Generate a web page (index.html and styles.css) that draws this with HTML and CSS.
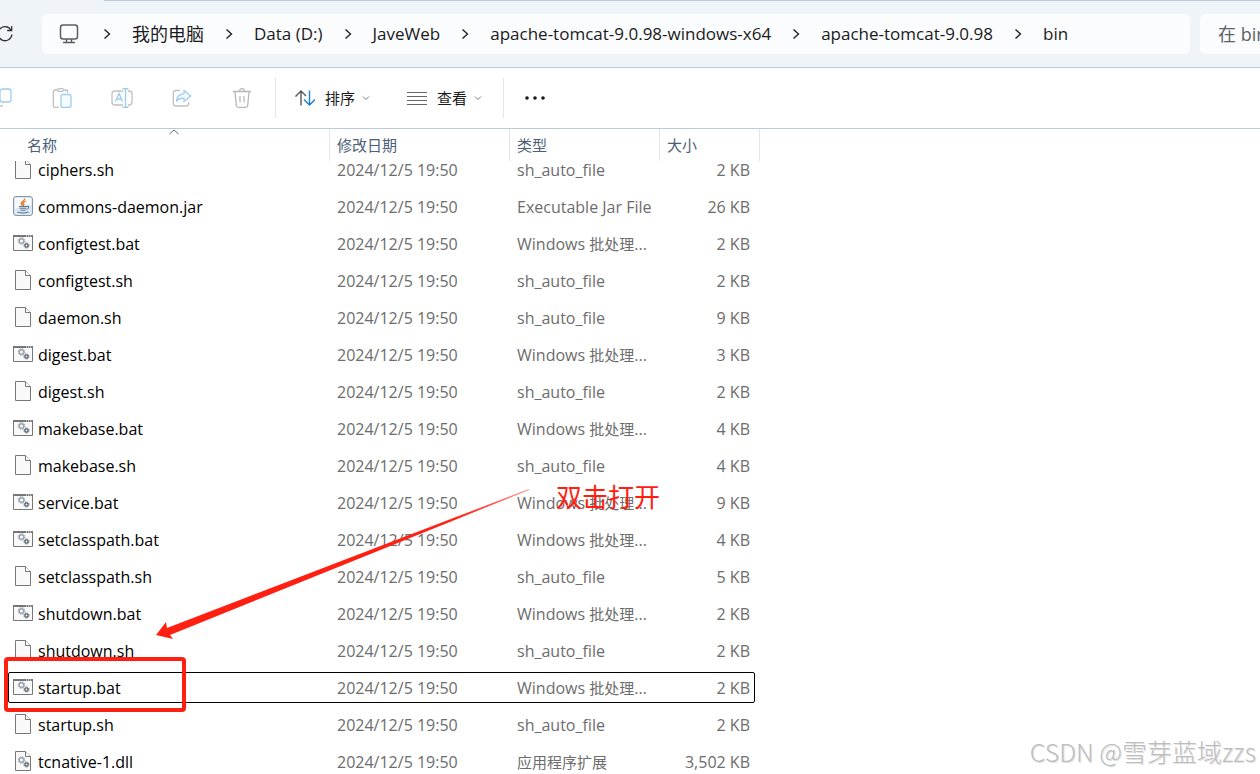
FILE: index.html
```html
<!DOCTYPE html>
<html lang="zh-CN">
<head>
<meta charset="utf-8">
<title>bin</title>
<link rel="stylesheet" href="styles.css">
</head>
<body>
<svg class="sprite" aria-hidden="true">
  <symbol id="doc" viewBox="0 0 20 20"><path d="M2.5.5h10l5 5v14h-15z" fill="#f9f9f9" stroke="#777"/><path d="M12.500.5v5h5" fill="#fff" stroke="#777"/></symbol>
  <symbol id="gears" viewBox="0 0 14 12"><circle cx="4.500" cy="4" r="2.300" fill="none" stroke="#9aa5b1" stroke-width="1.500"/><circle cx="4.500" cy="4" r="3.400" fill="none" stroke="#9aa5b1" stroke-width="1" stroke-dasharray="1.400 1.270"/><circle cx="9.500" cy="8.500" r="1.600" fill="none" stroke="#56616b" stroke-width="1.300"/><circle cx="9.500" cy="8.500" r="2.500" fill="none" stroke="#56616b" stroke-width="1" stroke-dasharray="1 .96"/></symbol>
  <symbol id="bat" viewBox="0 0 20 20"><path d="M.5 2.500h19v15H.5z" fill="#f9f9f9" stroke="#777"/><path d="M0 2h20v2H0z" fill="#777"/><path d="M13 3h1m1 0h1m1 0h1" stroke="#fff"/><use href="#gears" x="4" y="4" width="14" height="12"/></symbol>
  <symbol id="dll" viewBox="0 0 20 20"><use href="#doc" width="20" height="20"/><use href="#gears" x="4" y="5" width="14" height="12"/></symbol>
  <symbol id="jar" viewBox="0 0 20 20"><rect x=".5" y=".5" width="19" height="19" rx="2.500" fill="#dde6ee" stroke="#8397a8"/><path d="M2 2h16v7Q9 9 2 13z" fill="#f8fafc"/><path d="M11.500 2.500c1 2-4 3-2.500 5.500l1 1.500M13 5c-3 1-3.500 2-2 3.500-.3 1-.5 1-1 1.500M8.500 6q-1 2 1 3.500" fill="none" stroke="#e87a2a" stroke-width="1.200"/><path d="M6 10.500h7.500M6.500 12.300h6.500M7.500 14.200h5M4.500 16.300q6 1.600 11-.3M13.500 10.500c3-.8 2.800 2.500-.3 2.800" fill="none" stroke="#54799c" stroke-width="1.100"/></symbol>
  <symbol id="next" viewBox="0 0 8 12"><path d="m1.500 1.500 5 4.500-5 4.500" fill="none" stroke="#222" stroke-width="1.400"/></symbol>
  <symbol id="down" viewBox="0 0 8 6"><path d="m1 1.500 3 3 3-3" fill="none" stroke="#777"/></symbol>
</svg>
<div class="window">
  <header class="navbar">
    <button class="refresh" aria-label="刷新"><svg width="16" height="18" viewBox="0 0 16 18" fill="none" stroke="#333" stroke-width="1.300"><path d="M14 5A7 7 0 1 0 15 9.500M14.700 1v4.500h-4.500"/></svg></button>
    <nav class="address" aria-label="路径">
      <svg class="pc" width="20" height="20" viewBox="0 0 20 20" fill="none" stroke="#5d5d5d" stroke-width="1.500"><rect x="1.500" y="1" width="17" height="14" rx="2.500"/><path d="M7.500 15v3.500M12.500 15v3.500M4 18.500h12"/></svg>
      <svg class="sep"><use href="#next"/></svg><a href="#">我的电脑</a>
      <svg class="sep"><use href="#next"/></svg><a href="#">Data (D:)</a>
      <svg class="sep"><use href="#next"/></svg><a href="#">JaveWeb</a>
      <svg class="sep"><use href="#next"/></svg><a href="#">apache-tomcat-9.0.98-windows-x64</a>
      <svg class="sep"><use href="#next"/></svg><a href="#">apache-tomcat-9.0.98</a>
      <svg class="sep"><use href="#next"/></svg><a href="#">bin</a>
    </nav>
    <input class="search" type="search" aria-label="搜索" placeholder="在 bin 中搜索">
  </header>
  <div class="toolbar">
    <button class="tool" aria-label="复制"><svg width="20" height="20" viewBox="0 0 20 20" fill="none"><path d="M3 5v9q0 4 4 4h4" stroke="#c3c3c3" stroke-width="1.300"/><rect x="8" y="1" width="11" height="13" rx="2.500" stroke="#9fcdf0" stroke-width="1.300"/></svg></button>
    <button class="tool" aria-label="粘贴"><svg width="20" height="20" viewBox="0 0 20 20" fill="none" stroke="#c0c0c0" stroke-width="1.300"><path d="M7 19.300H3q-1.700 0-1.700-1.700V3.500Q1.300 2 3 2h2.500m6 0H14q1.700 0 1.700 1.500V5"/><rect x="5.500" y=".7" width="6" height="2.600" rx="1.300"/><rect x="9" y="6.500" width="10" height="13" rx="1.700" fill="#f5faff" stroke="#9fcdf0"/></svg></button>
    <button class="tool" aria-label="重命名"><svg width="22" height="20" viewBox="0 0 22 20" fill="none" stroke="#c0c0c0" stroke-width="1.300"><path d="M12 17H4q-3 0-3-3V6q0-3 3-3h8m5 0h1q3 0 3 3v8q0 3-3 3h-1"/><path d="m4.500 13.500 3.500-8 3.500 8M5.700 11h4.600M14.500 1v18M11.500.7h6m-6 18.600h6" stroke="#9fcdf0" stroke-width="1.400"/></svg></button>
    <button class="tool" aria-label="共享"><svg width="20" height="20" viewBox="0 0 20 20" fill="none" stroke="#c0c0c0" stroke-width="1.300"><path d="M8 2.500H4Q1.300 2.500 1.300 5v10.500Q1.300 18 4 18h10q2.700 0 2.700-2.500V14"/><path d="M12 2.500 18.800 8 12 13.500v-3.200q-5-.3-7.500 3 .5-7 7.500-7.600z" stroke="#9fcdf0" fill="#f5faff" stroke-linejoin="round"/></svg></button>
    <button class="tool" aria-label="删除"><svg width="20" height="20" viewBox="0 0 20 20" fill="none" stroke="#b8b8b8" stroke-width="1.300"><path d="M1 3.500h18M7.500 3.500q0-2.800 2.500-2.800t2.500 2.800M3 3.500l1.300 14q.2 1.800 2 1.800h7.400q1.800 0 2-1.800l1.300-14M8 8v6.500M12 8v6.500"/></svg></button>
    <span class="divider"></span>
    <button class="menu"><svg width="20" height="16" viewBox="0 0 20 16" fill="none" stroke-width="1.400"><path d="M6 15.500V1M.5 6.500 6 1l5 5" stroke="#555"/><path d="M14.500.5V15M9 9.500l5.500 5.500L20 9.500" stroke="#1b7fd0"/></svg><span class="label">排序</span><svg class="caret"><use href="#down"/></svg></button>
    <button class="menu view"><svg width="20" height="14" viewBox="0 0 20 14" stroke="#666"><path d="M0 1.500h20M0 5.500h20M0 9.500h20M0 13.500h20"/></svg><span class="label">查看</span><svg class="caret"><use href="#down"/></svg></button>
    <span class="divider"></span>
    <button class="more" aria-label="更多"><svg width="20" height="4" viewBox="0 0 20 4" fill="#1a1a1a"><circle cx="2" cy="2" r="1.800"/><circle cx="10" cy="2" r="1.800"/><circle cx="18" cy="2" r="1.800"/></svg></button>
  </div>
  <main class="files">
    <table>
      <colgroup><col class="c-name"><col class="c-date"><col class="c-type"><col class="c-size"></colgroup>
      <thead><tr><th class="name-head">名称<svg class="sorted" width="10" height="6" viewBox="0 0 10 6"><path d="m.5 5 4.500-4 4.500 4" fill="none" stroke="#666"/></svg></th><th>修改日期</th><th>类型</th><th>大小</th></tr></thead>
      <tbody>
        <tr class="partial"><td><div class="name"><svg><use href="#doc"/></svg>ciphers.sh</div></td><td><div>2024/12/5 19:50</div></td><td><div>sh_auto_file</div></td><td><div>2 KB</div></td></tr>
        <tr><td><div class="name"><svg><use href="#jar"/></svg>commons-daemon.jar</div></td><td>2024/12/5 19:50</td><td>Executable Jar File</td><td>26 KB</td></tr>
        <tr><td><div class="name"><svg><use href="#bat"/></svg>configtest.bat</div></td><td>2024/12/5 19:50</td><td>Windows <span class="zh">批处理</span>...</td><td>2 KB</td></tr>
        <tr><td><div class="name"><svg><use href="#doc"/></svg>configtest.sh</div></td><td>2024/12/5 19:50</td><td>sh_auto_file</td><td>2 KB</td></tr>
        <tr><td><div class="name"><svg><use href="#doc"/></svg>daemon.sh</div></td><td>2024/12/5 19:50</td><td>sh_auto_file</td><td>9 KB</td></tr>
        <tr><td><div class="name"><svg><use href="#bat"/></svg>digest.bat</div></td><td>2024/12/5 19:50</td><td>Windows <span class="zh">批处理</span>...</td><td>3 KB</td></tr>
        <tr><td><div class="name"><svg><use href="#doc"/></svg>digest.sh</div></td><td>2024/12/5 19:50</td><td>sh_auto_file</td><td>2 KB</td></tr>
        <tr><td><div class="name"><svg><use href="#bat"/></svg>makebase.bat</div></td><td>2024/12/5 19:50</td><td>Windows <span class="zh">批处理</span>...</td><td>4 KB</td></tr>
        <tr><td><div class="name"><svg><use href="#doc"/></svg>makebase.sh</div></td><td>2024/12/5 19:50</td><td>sh_auto_file</td><td>4 KB</td></tr>
        <tr><td><div class="name"><svg><use href="#bat"/></svg>service.bat</div></td><td>2024/12/5 19:50</td><td>Windows <span class="zh">批处理</span>...</td><td>9 KB</td></tr>
        <tr><td><div class="name"><svg><use href="#bat"/></svg>setclasspath.bat</div></td><td>2024/12/5 19:50</td><td>Windows <span class="zh">批处理</span>...</td><td>4 KB</td></tr>
        <tr><td><div class="name"><svg><use href="#doc"/></svg>setclasspath.sh</div></td><td>2024/12/5 19:50</td><td>sh_auto_file</td><td>5 KB</td></tr>
        <tr><td><div class="name"><svg><use href="#bat"/></svg>shutdown.bat</div></td><td>2024/12/5 19:50</td><td>Windows <span class="zh">批处理</span>...</td><td>2 KB</td></tr>
        <tr><td><div class="name"><svg><use href="#doc"/></svg>shutdown.sh</div></td><td>2024/12/5 19:50</td><td>sh_auto_file</td><td>2 KB</td></tr>
        <tr class="focused"><td><div class="name"><svg><use href="#bat"/></svg>startup.bat</div></td><td>2024/12/5 19:50</td><td>Windows <span class="zh">批处理</span>...</td><td>2 KB</td></tr>
        <tr><td><div class="name"><svg><use href="#doc"/></svg>startup.sh</div></td><td>2024/12/5 19:50</td><td>sh_auto_file</td><td>2 KB</td></tr>
        <tr><td><div class="name"><svg><use href="#dll"/></svg>tcnative-1.dll</div></td><td>2024/12/5 19:50</td><td><span class="zh">应用程序扩展</span></td><td>3,502 KB</td></tr>
      </tbody>
    </table>
    <svg class="arrow" width="374" height="150" viewBox="0 0 374 150"><defs><linearGradient id="fade"><stop offset=".8" stop-color="#ff2012"/><stop offset="1" stop-color="#ff2012" stop-opacity=".5"/></linearGradient></defs><path d="M0 146 10 133l1 6L373 0v1L14 146l3 4z" fill="url(#fade)"/></svg>
    <span class="mark-box"></span>
    <span class="mark-text">双击打开</span>
  </main>
  <span class="watermark">CSDN @雪芽蓝域zzs</span>
</div>
</body>
</html>
```
FILE: styles.css
```css
* { box-sizing: border-box; }
body {
  margin: 0;
  overflow: hidden;
  background: #fff;
  color: #1a1a1a;
  font: 16px "Open Sans", "Noto Sans CJK SC", sans-serif;
}
button { padding: 0; border: 0; background: none; font: inherit; color: inherit; }
svg { flex: none; }
.sprite { position: absolute; width: 0; height: 0; }
.window { position: relative; display: flex; flex-direction: column; height: 100vh; overflow: hidden; }

.navbar {
  flex: none;
  display: flex;
  align-items: center;
  height: 68px;
  border-bottom: 1px solid #b9cbdc;
  background: linear-gradient(#b9cbdc, #b9cbdc) 104px 0 / 100% 1px no-repeat #eff4f9;
}
.refresh { flex: none; display: flex; width: 42px; }
.refresh svg { margin-left: -3px; }
.address, .search { height: 40px; border-radius: 5px; background: #fbfcfe; }
.address { flex: 1; display: flex; align-items: center; padding-left: 17px; font-size: 17px; }
.address a { color: inherit; text-decoration: none; white-space: nowrap; }
.address a:first-of-type { padding-bottom: 2px; font-size: 18px; }
.pc { margin-right: 3px; }
.sep { width: 8px; height: 12px; margin: 0 21px; }
.search {
  flex: none;
  width: 260px;
  margin: 0 -200px 0 10px;
  padding: 0 18px;
  border: 0;
  font: 18px "Open Sans", "Noto Sans CJK SC", sans-serif;
}
.search::placeholder { color: #606266; }

.toolbar {
  flex: none;
  display: flex;
  align-items: center;
  height: 61px;
  border-bottom: 1px solid #b9cbdc;
  font-size: 15px;
}
.tool { flex: none; display: flex; justify-content: center; width: 60px; }
.tool:first-child { margin-left: -28px; }
.divider { width: 1px; height: 40px; margin-left: 3px; background: #e5e5e5; }
.menu { display: flex; align-items: center; gap: 10px; margin-left: 19px; }
.menu.view { margin-left: 37px; }
.label { padding-bottom: 2px; }
.caret { width: 8px; height: 6px; margin-left: -3px; }
.view + .divider { margin-left: 21px; }
.more { display: flex; margin-left: 21px; }

.files { position: relative; flex: 1; min-height: 0; }
table { width: 760px; table-layout: fixed; border-collapse: collapse; }
.c-name { width: 330px; }
.c-date { width: 180px; }
.c-type { width: 150px; }
.c-size { width: 100px; }
th {
  position: relative;
  height: 32px;
  padding: 0 0 0 7px;
  box-shadow: inset -1px 0 #e2e6ea;
  color: #4c607a;
  font-size: 15px;
  font-weight: 400;
  line-height: 32px;
  text-align: left;
}
.name-head { padding-left: 27px; }
.sorted { position: absolute; top: 0; left: 169px; }
td { height: 37px; padding: 0 0 0 7px; color: #6d6d6d; line-height: 37px; white-space: nowrap; }
td:first-child { padding-left: 13px; }
td:last-child { padding: 0 10px 0 0; text-align: right; }
.name { display: flex; align-items: center; gap: 5px; height: 37px; color: #000; }
.name svg { width: 20px; height: 20px; margin-bottom: 3px; }
.zh { font-size: 15px; }
.partial td { height: 28px; overflow: hidden; vertical-align: bottom; }
.partial div { height: 37px; margin-top: -9px; }
.partial .name { clip-path: inset(9px 0 0); }
.focused { position: relative; }
.focused::after {
  content: "";
  position: absolute;
  inset: 2px 5px 4px 8px;
  border: 1px solid #000;
  border-radius: 2px;
}

.arrow { position: absolute; top: 360px; left: 156px; }
.mark-box {
  position: absolute;
  top: 528px;
  left: 4px;
  width: 182px;
  height: 55px;
  border: 4px solid #ff2012;
  border-radius: 4px;
}
.mark-text { position: absolute; top: 349px; left: 556px; color: #ff2012; font-size: 26px; line-height: 38px; }
.watermark {
  position: absolute;
  right: 4px;
  bottom: 5px;
  color: #bdbdbd;
  font-size: 25px;
  font-family: "Noto Sans CJK SC", sans-serif;
  font-weight: 300;
  line-height: 36px;
  text-shadow: 1px 1px #e4e4e4;
}
```
